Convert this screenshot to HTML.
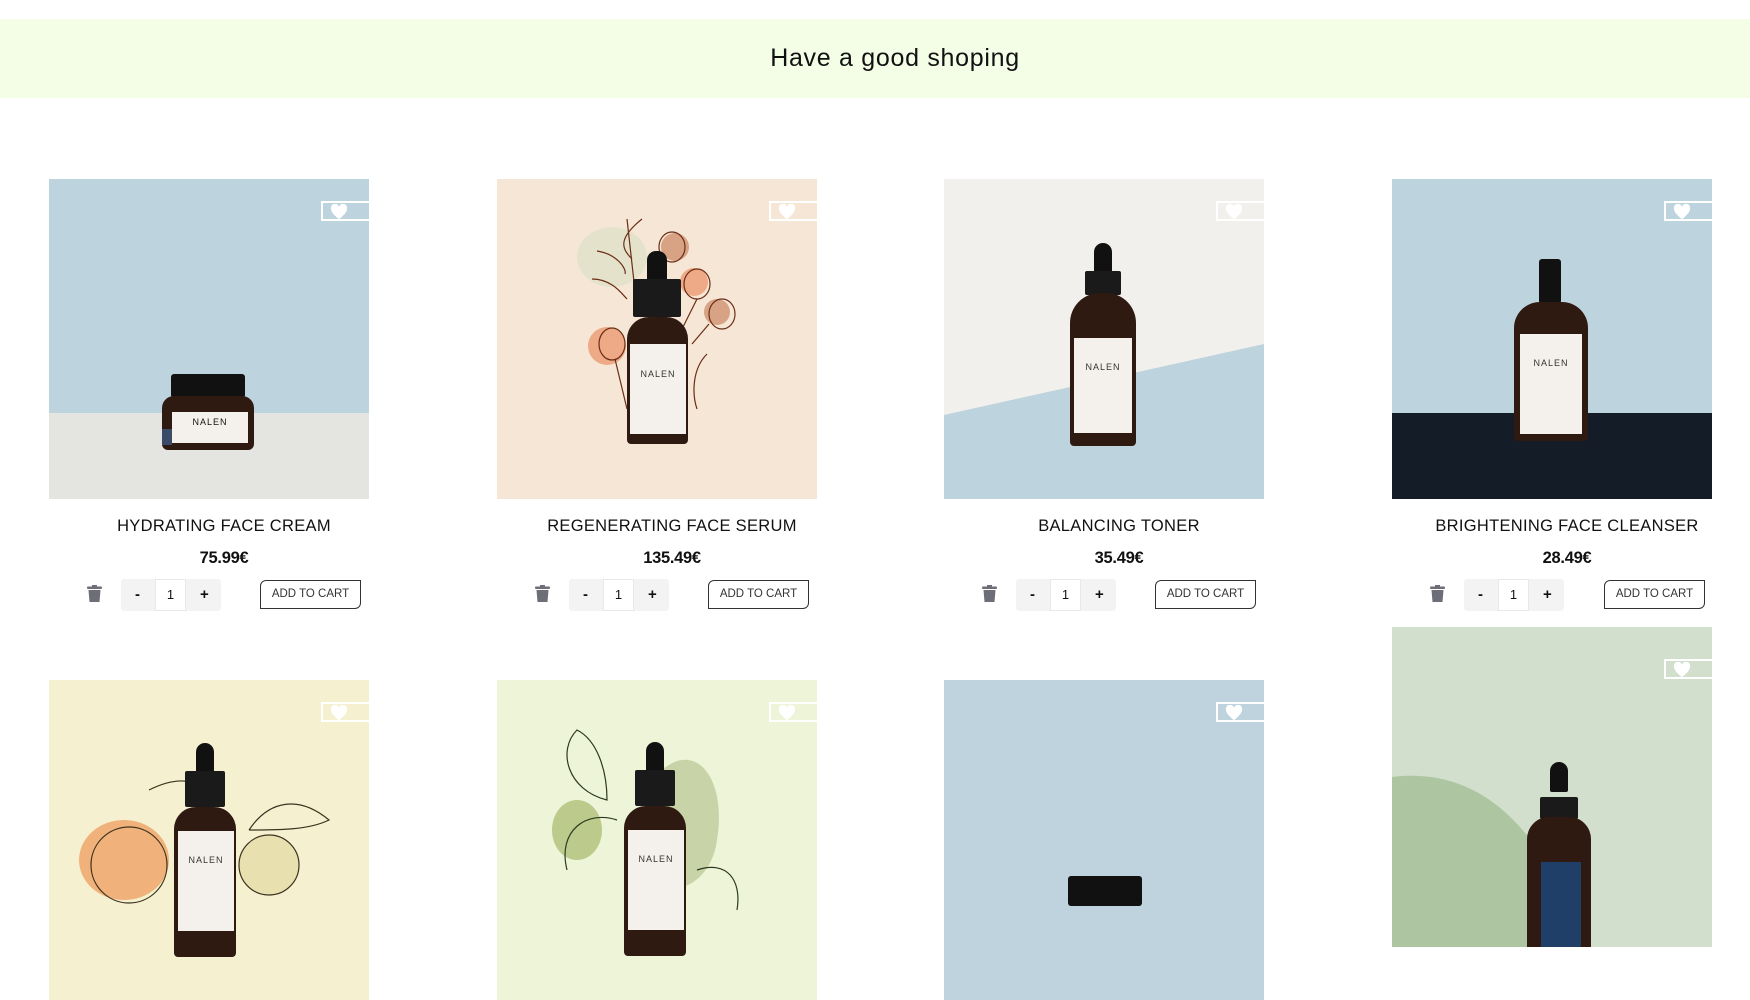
<!DOCTYPE html>
<html><head><meta charset="utf-8"><style>
*{margin:0;padding:0;box-sizing:border-box}
body{width:1750px;height:893px;overflow:hidden;background:#fff;font-family:"Liberation Sans",sans-serif;position:relative;color:#111}
.banner{position:absolute;left:0;top:19px;width:1750px;height:79px;background:#f4fde6;text-align:center;line-height:79px;font-size:25px;color:#111;padding-left:40px;letter-spacing:.7px}
.img{position:absolute;width:320px;height:320px;overflow:hidden}
.heart{position:absolute;right:0;top:22px;width:48px;height:20px;border:2px solid #fff;border-right:none}
.heart svg{position:absolute;left:7px;top:1px}
.name{position:absolute;width:360px;text-align:center;font-size:16.5px;letter-spacing:.3px}
.price{position:absolute;width:360px;text-align:center;font-size:16.5px;font-weight:bold;letter-spacing:-.3px}
.trash{position:absolute}
.qty{position:absolute;width:100px;height:32px;background:#f3f3f3;border-radius:3px}
.qty span{position:absolute;top:0;line-height:32px;font-size:15px;font-weight:bold}
.qty .in{position:absolute;left:34px;top:0;width:31px;height:32px;background:#fff;border:1px solid #e8e8e8;text-align:center;line-height:30px;font-size:13px;font-weight:normal}
.add{position:absolute;width:101px;height:29px;border:1.5px solid #333;border-radius:6px 0 6px 0;font-size:11.5px;text-align:center;line-height:26px;color:#333}
.b{position:absolute}
.bulb{position:absolute;background:#111;border-radius:9px 9px 2px 2px}
.collar{position:absolute;background:#1a1a1a;border-radius:2px}
.body{position:absolute;background:#2f1a12;border-radius:22px 22px 4px 4px}
.label{position:absolute;background:#f4f1ec;text-align:center;font-size:9px;color:#333;letter-spacing:1px}
</style></head><body>
<div class="banner">Have a good shoping</div>

<div class="img" style="left:49px;top:179px;background:#bdd3dd">
 <div style="position:absolute;left:0;top:234px;width:320px;height:86px;background:#e4e4e0"></div>
 <div class="b" style="left:113px;top:195px;width:92px;height:76px">
  <div style="position:absolute;left:9px;top:0;width:74px;height:24px;background:#111;border-radius:3px"></div>
  <div style="position:absolute;left:0;top:22px;width:92px;height:54px;background:#2f1a12;border-radius:12px 12px 6px 6px"></div>
  <div style="position:absolute;left:10px;top:38px;width:76px;height:31px;background:#f4f1ec;font-size:9px;text-align:center;padding-top:5px;letter-spacing:1px">NALEN</div>
  <div style="position:absolute;left:0;top:55px;width:10px;height:16px;background:#3a4b68"></div>
 </div>
 <div class="heart"><svg width="18" height="16" viewBox="0 0 24 22"><path d="M12 21 C5 15 1 11 1 6.5 A5.5 5.5 0 0 1 12 4 A5.5 5.5 0 0 1 23 6.5 C23 11 19 15 12 21Z" fill="#fff"/></svg></div>
</div>
<div class="img" style="left:497px;top:179px;background:#f6e6d6">
 <svg style="position:absolute;left:0;top:0" width="320" height="320">
  <ellipse cx="115" cy="78" rx="35" ry="30" fill="#e5e2cc"/>
  <circle cx="178" cy="68" r="14" fill="#d8a285"/><circle cx="197" cy="103" r="14" fill="#eeaa86"/>
  <circle cx="220" cy="133" r="13" fill="#d8a285"/><circle cx="110" cy="167" r="19" fill="#eeaa86"/>
  <g fill="none" stroke="#6b2d16" stroke-width="1.2">
   <path d="M140 130 L130 40 M145 40 C120 60 125 70 135 80 M100 72 C120 75 130 90 128 95 M95 100 C115 100 125 115 130 120"/>
   <ellipse cx="175" cy="68" rx="13" ry="15"/><ellipse cx="200" cy="105" rx="13" ry="15"/><ellipse cx="225" cy="135" rx="13" ry="15"/><ellipse cx="115" cy="165" rx="13" ry="16"/>
   <path d="M118 180 L130 230 M200 120 L185 150 M212 145 L195 165 M210 175 C195 190 195 215 200 230"/>
  </g>
 </svg>
 <div class="b" style="left:130px;top:72px">
  <div class="bulb" style="left:20px;top:0;width:20px;height:30px"></div>
  <div class="collar" style="left:6px;top:28px;width:48px;height:38px"></div>
  <div class="body" style="left:0;top:66px;width:61px;height:127px"></div>
  <div class="label" style="left:3px;top:93px;width:56px;height:90px;padding-top:25px">NALEN</div>
 </div>
 <div class="heart"><svg width="18" height="16" viewBox="0 0 24 22"><path d="M12 21 C5 15 1 11 1 6.5 A5.5 5.5 0 0 1 12 4 A5.5 5.5 0 0 1 23 6.5 C23 11 19 15 12 21Z" fill="#fff"/></svg></div>
</div>
<div class="img" style="left:944px;top:179px;background:#f2f0ec">
 <svg style="position:absolute;left:0;top:0" width="320" height="320"><polygon points="0,236 320,165 320,320 0,320" fill="#bdd3dd"/></svg>
 <div class="b" style="left:126px;top:64px">
  <div class="bulb" style="left:24px;top:0;width:18px;height:30px"></div>
  <div class="collar" style="left:15px;top:28px;width:36px;height:24px"></div>
  <div class="body" style="left:0;top:50px;width:66px;height:153px;border-radius:30px 30px 4px 4px"></div>
  <div class="label" style="left:4px;top:95px;width:58px;height:95px;padding-top:24px">NALEN</div>
 </div>
 <div class="heart"><svg width="18" height="16" viewBox="0 0 24 22"><path d="M12 21 C5 15 1 11 1 6.5 A5.5 5.5 0 0 1 12 4 A5.5 5.5 0 0 1 23 6.5 C23 11 19 15 12 21Z" fill="#fff"/></svg></div>
</div>
<div class="img" style="left:1392px;top:179px;background:#bdd3dd">
 <div style="position:absolute;left:0;top:234px;width:320px;height:86px;background:#141c27"></div>
 <div class="b" style="left:122px;top:80px">
  <div class="bulb" style="left:25px;top:0;width:22px;height:45px;border-radius:3px"></div>
  <div class="body" style="left:0;top:43px;width:74px;height:139px;border-radius:26px 26px 4px 4px"></div>
  <div class="label" style="left:6px;top:75px;width:62px;height:100px;padding-top:24px">NALEN</div>
 </div>
 <div class="heart"><svg width="18" height="16" viewBox="0 0 24 22"><path d="M12 21 C5 15 1 11 1 6.5 A5.5 5.5 0 0 1 12 4 A5.5 5.5 0 0 1 23 6.5 C23 11 19 15 12 21Z" fill="#fff"/></svg></div>
</div>

<div class="name" style="left:44px;top:517px">HYDRATING FACE CREAM</div>
<div class="name" style="left:492px;top:517px">REGENERATING FACE SERUM</div>
<div class="name" style="left:939px;top:517px">BALANCING TONER</div>
<div class="name" style="left:1387px;top:517px">BRIGHTENING FACE CLEANSER</div>
<div class="price" style="left:44px;top:549px">75.99€</div>
<div class="price" style="left:492px;top:549px">135.49€</div>
<div class="price" style="left:939px;top:549px">35.49€</div>
<div class="price" style="left:1387px;top:549px">28.49€</div>

<svg class="trash" style="left:87px;top:585px" width="15" height="17" viewBox="0 0 15 17"><rect x="0" y="1.5" width="15" height="2.5" rx="1" fill="#6e6e78"/><rect x="5" y="0" width="5" height="2" fill="#6e6e78"/><path d="M1.5 5 H13.5 L12.5 17 H2.5Z" fill="#6e6e78"/></svg>
<div class="qty" style="left:121px;top:579px"><span style="left:14px">-</span><div class="in">1</div><span style="left:79px">+</span></div>
<div class="add" style="left:260px;top:580px">ADD TO CART</div>

<svg class="trash" style="left:535px;top:585px" width="15" height="17" viewBox="0 0 15 17"><rect x="0" y="1.5" width="15" height="2.5" rx="1" fill="#6e6e78"/><rect x="5" y="0" width="5" height="2" fill="#6e6e78"/><path d="M1.5 5 H13.5 L12.5 17 H2.5Z" fill="#6e6e78"/></svg>
<div class="qty" style="left:569px;top:579px"><span style="left:14px">-</span><div class="in">1</div><span style="left:79px">+</span></div>
<div class="add" style="left:708px;top:580px">ADD TO CART</div>

<svg class="trash" style="left:982px;top:585px" width="15" height="17" viewBox="0 0 15 17"><rect x="0" y="1.5" width="15" height="2.5" rx="1" fill="#6e6e78"/><rect x="5" y="0" width="5" height="2" fill="#6e6e78"/><path d="M1.5 5 H13.5 L12.5 17 H2.5Z" fill="#6e6e78"/></svg>
<div class="qty" style="left:1016px;top:579px"><span style="left:14px">-</span><div class="in">1</div><span style="left:79px">+</span></div>
<div class="add" style="left:1155px;top:580px">ADD TO CART</div>

<svg class="trash" style="left:1430px;top:585px" width="15" height="17" viewBox="0 0 15 17"><rect x="0" y="1.5" width="15" height="2.5" rx="1" fill="#6e6e78"/><rect x="5" y="0" width="5" height="2" fill="#6e6e78"/><path d="M1.5 5 H13.5 L12.5 17 H2.5Z" fill="#6e6e78"/></svg>
<div class="qty" style="left:1464px;top:579px"><span style="left:14px">-</span><div class="in">1</div><span style="left:79px">+</span></div>
<div class="add" style="left:1604px;top:580px">ADD TO CART</div>

<div class="img" style="left:49px;top:680px;background:#f5f1d0">
 <svg style="position:absolute;left:0;top:0" width="320" height="320">
  <ellipse cx="75" cy="180" rx="45" ry="40" fill="#f0b27a"/>
  <circle cx="220" cy="185" r="30" fill="#e9e0b0"/>
  <g fill="none" stroke="#3d3220" stroke-width="1.2"><path d="M100 110 C130 95 150 100 160 115 M200 150 C220 120 250 115 280 140 C260 150 230 150 200 150"/><circle cx="220" cy="185" r="30"/><circle cx="80" cy="185" r="38"/></g>
 </svg>
 <div class="b" style="left:125px;top:63px">
  <div class="bulb" style="left:22px;top:0;width:18px;height:30px"></div>
  <div class="collar" style="left:11px;top:28px;width:40px;height:36px"></div>
  <div class="body" style="left:0;top:64px;width:62px;height:150px"></div>
  <div class="label" style="left:4px;top:88px;width:56px;height:100px;padding-top:24px">NALEN</div>
 </div>
 <div class="heart"><svg width="18" height="16" viewBox="0 0 24 22"><path d="M12 21 C5 15 1 11 1 6.5 A5.5 5.5 0 0 1 12 4 A5.5 5.5 0 0 1 23 6.5 C23 11 19 15 12 21Z" fill="#fff"/></svg></div>
</div>
<div class="img" style="left:497px;top:680px;background:#eef4d8">
 <svg style="position:absolute;left:0;top:0" width="320" height="320">
  <path d="M165 90 C200 60 230 100 220 160 C215 200 180 220 160 200Z" fill="#c9d3a8"/>
  <ellipse cx="80" cy="150" rx="25" ry="30" fill="#bccb8c"/>
  <g fill="none" stroke="#2b3a20" stroke-width="1.2"><path d="M80 50 C60 70 70 110 110 120 C110 90 100 60 80 50Z M120 140 C90 130 60 150 70 190 M200 190 C230 180 245 200 240 230"/></g>
 </svg>
 <div class="b" style="left:127px;top:62px">
  <div class="bulb" style="left:22px;top:0;width:18px;height:30px"></div>
  <div class="collar" style="left:11px;top:28px;width:40px;height:36px"></div>
  <div class="body" style="left:0;top:64px;width:62px;height:150px"></div>
  <div class="label" style="left:4px;top:88px;width:56px;height:100px;padding-top:24px">NALEN</div>
 </div>
 <div class="heart"><svg width="18" height="16" viewBox="0 0 24 22"><path d="M12 21 C5 15 1 11 1 6.5 A5.5 5.5 0 0 1 12 4 A5.5 5.5 0 0 1 23 6.5 C23 11 19 15 12 21Z" fill="#fff"/></svg></div>
</div>
<div class="img" style="left:944px;top:680px;background:#bed3de">
 <div style="position:absolute;left:124px;top:196px;width:74px;height:30px;background:#111;border-radius:3px"></div>
 <div class="heart"><svg width="18" height="16" viewBox="0 0 24 22"><path d="M12 21 C5 15 1 11 1 6.5 A5.5 5.5 0 0 1 12 4 A5.5 5.5 0 0 1 23 6.5 C23 11 19 15 12 21Z" fill="#fff"/></svg></div>
</div>
<div class="img" style="left:1392px;top:627px;background:#d2dfcc">
 <svg style="position:absolute;left:0;top:0" width="320" height="320"><path d="M0 150 C80 140 150 190 190 320 L0 320Z" fill="#adc5a1"/></svg>
 <div class="b" style="left:135px;top:135px">
  <div class="bulb" style="left:23px;top:0;width:18px;height:30px"></div>
  <div class="collar" style="left:13px;top:35px;width:38px;height:22px"></div>
  <div class="body" style="left:0;top:55px;width:64px;height:150px"></div>
  <div style="position:absolute;left:14px;top:100px;width:40px;height:100px;background:#1f3e68"></div>
 </div>
 <div class="heart" style="top:32px"><svg width="18" height="16" viewBox="0 0 24 22"><path d="M12 21 C5 15 1 11 1 6.5 A5.5 5.5 0 0 1 12 4 A5.5 5.5 0 0 1 23 6.5 C23 11 19 15 12 21Z" fill="#fff"/></svg></div>
</div>
</body></html>
